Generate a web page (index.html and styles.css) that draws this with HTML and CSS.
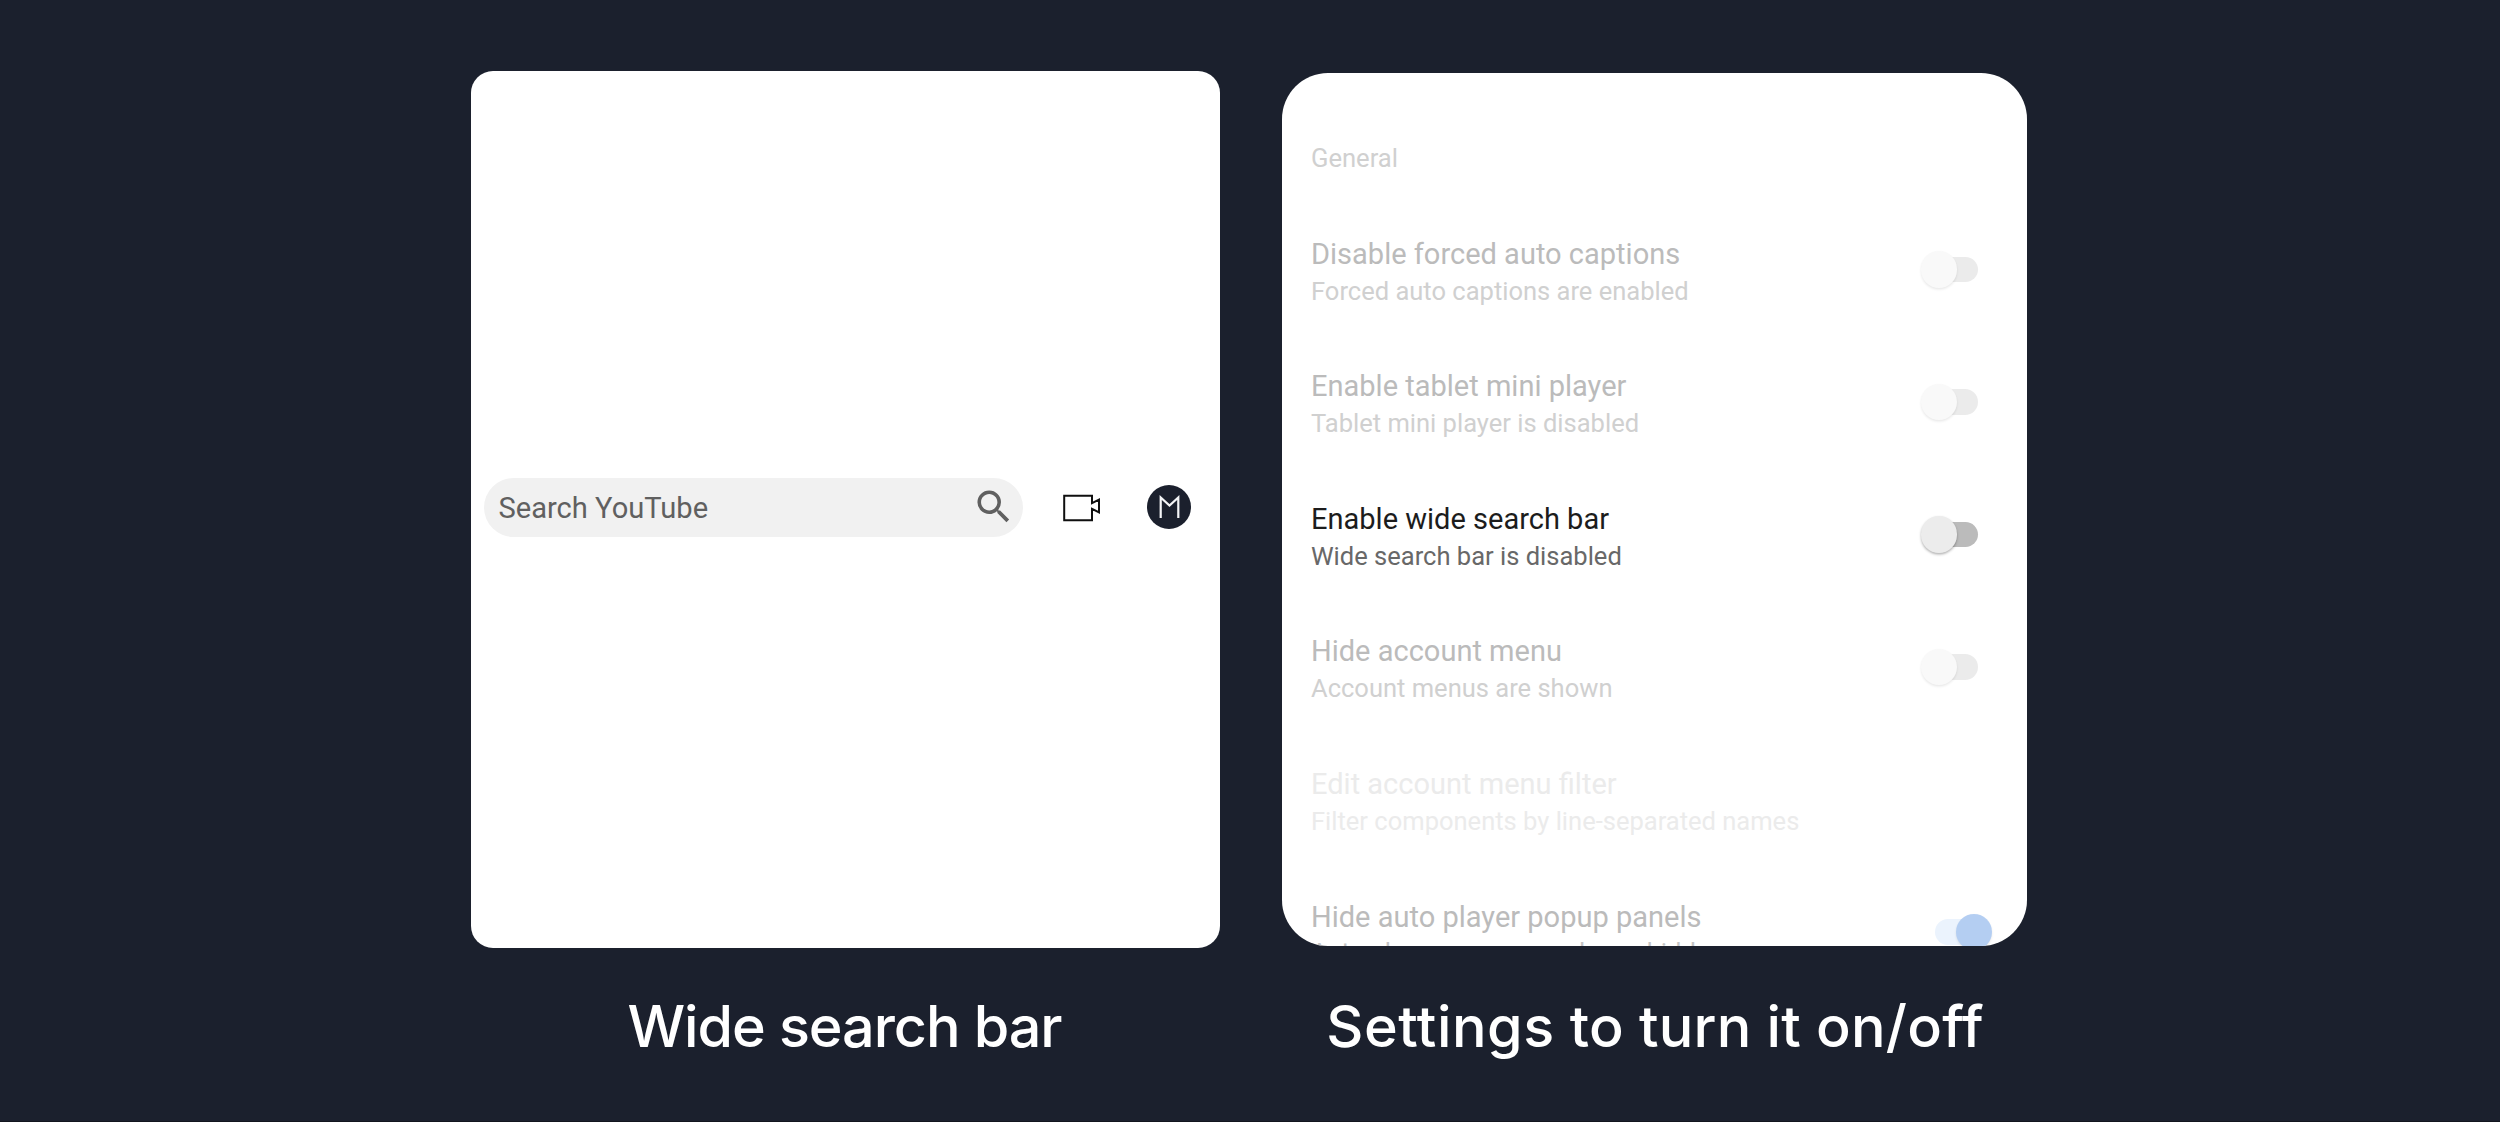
FILE: index.html
```html
<!DOCTYPE html>
<html lang="en">
<head>
<meta charset="utf-8">
<title>Wide search bar</title>
<link rel="stylesheet" href="styles.css">
</head>
<body>
<main class="showcase">
  <figure class="panel panel-preview">
    <div class="card card-preview">
      <div class="appbar">
        <div class="search">
          <span class="search-text">Search YouTube</span>
          <svg class="search-icon" viewBox="0 0 24 24" aria-hidden="true"><path d="M15.5 14h-.79l-.28-.27A6.471 6.471 0 0 0 16 9.5 6.5 6.5 0 1 0 9.500 16c1.610 0 3.090-.59 4.230-1.570l.27.28v.79l5 4.990L20.490 19l-4.990-5zm-6 0C7.010 14 5 11.990 5 9.500S7.010 5 9.500 5 14 7.010 14 9.500 11.990 14 9.500 14z"/></svg>
        </div>
        <svg class="camera-icon" viewBox="0 0 38 28" aria-hidden="true"><path d="M1.200 1.700H29V9.200L36 5.600V18.400L29 14.800V26.300H1.200Z"/></svg>
        <svg class="avatar" viewBox="0 0 44 44" aria-hidden="true"><circle cx="22" cy="22" r="22"/><path d="M13.700 33V12.500L22.500 20.500L31.300 12.500V33"/></svg>
      </div>
    </div>
    <figcaption class="caption caption-preview">Wide search bar</figcaption>
  </figure>

  <figure class="panel panel-settings">
    <div class="card card-settings">
      <h2 class="section">General</h2>
      <div class="row dim">
        <div class="label"><p class="title">Disable forced auto captions</p><p class="summary">Forced auto captions are enabled</p></div>
        <span class="toggle"></span>
      </div>
      <div class="row dim">
        <div class="label"><p class="title">Enable tablet mini player</p><p class="summary">Tablet mini player is disabled</p></div>
        <span class="toggle"></span>
      </div>
      <div class="row">
        <div class="label"><p class="title">Enable wide search bar</p><p class="summary">Wide search bar is disabled</p></div>
        <span class="toggle"></span>
      </div>
      <div class="row dim">
        <div class="label"><p class="title">Hide account menu</p><p class="summary">Account menus are shown</p></div>
        <span class="toggle"></span>
      </div>
      <div class="row disabled">
        <div class="label"><p class="title">Edit account menu filter</p><p class="summary">Filter components by line-separated names</p></div>
      </div>
      <div class="row dim last">
        <div class="label"><p class="title">Hide auto player popup panels</p><p class="summary">Auto player popup panels are hidden</p></div>
        <span class="toggle on"></span>
      </div>
    </div>
    <figcaption class="caption caption-settings"><span class="wide-word">Settings</span> to turn it on/off</figcaption>
  </figure>
</main>
</body>
</html>
```
FILE: styles.css
```css
* { box-sizing: border-box; margin: 0; padding: 0; }

body {
  height: 1122px;
  overflow: hidden;
  background: #1b202d;
  border-bottom: 1px solid #12151e;
  font-family: Roboto, "Liberation Sans", sans-serif;
}

.showcase {
  display: flex;
  align-items: flex-start;
  gap: 62.4px;
  padding: 71px 0 0 471px;
}

.panel { display: flex; flex-direction: column; }
.panel-preview { width: 748.6px; }
.panel-settings { width: 745px; padding-top: 2px; }

.card { background: #fff; overflow: hidden; }
.card-preview { height: 877px; border-radius: 22px; }
.card-settings { height: 873px; border-radius: 46px; padding: 67px 34.4px 0 29px; }

/* App bar preview */
.appbar {
  display: flex;
  align-items: center;
  height: 59px;
  margin: 407px 28.6px 0 13px;
}
.search {
  display: flex;
  align-items: center;
  justify-content: space-between;
  width: 539px;
  height: 59px;
  padding: 0 8px 0 14.5px;
  border-radius: 30px;
  background: #f1f1f1;
}
.search-text { font-size: 29.1px; line-height: 36px; color: #606060; padding-top: 1px; }
.search-icon { width: 43.5px; height: 43.5px; margin-bottom: 1px; fill: #606060; }
.camera-icon { width: 38px; height: 28px; margin-left: 39.6px; fill: none; stroke: #0f0f0f; stroke-width: 2; }
.avatar { width: 44px; height: 44px; margin: 0 0 1px auto; fill: #1b202d; }
.avatar path { fill: none; stroke: #f4f5f7; stroke-width: 2.2; }

/* Settings list */
.section {
  height: 63px;
  font-size: 25.6px;
  font-weight: 400;
  line-height: 36px;
  color: #d0d0d0;
}
.row {
  display: flex;
  justify-content: space-between;
  height: 132.5px;
}
.label { padding-top: 32.5px; white-space: nowrap; }
.title { font-size: 29.03px; line-height: 36px; color: #1c1c1c; }
.summary { margin-top: 1.2px; font-size: 25.52px; line-height: 36px; color: #686868; }
.dim .title { color: #bbb; }
.dim .summary { color: #d0d0d0; }
.disabled .title { color: #ebebeb; }
.disabled .summary { color: #ebebeb; }
.last .title { margin-top: .5px; }
.last .summary { margin-top: -.8px; color: #c4c4c4; }

.toggle {
  display: flex;
  align-items: center;
  width: 58px;
  height: 37px;
  margin: 48px 14.4px 0 0;
}
.toggle::before {
  content: "";
  width: 50px;
  height: 25.6px;
  margin-left: 8px;
  border-radius: 13px;
  background: #bbb;
}
.toggle::after {
  content: "";
  width: 36.5px;
  height: 36.5px;
  flex: none;
  margin-left: -57.5px;
  border-radius: 50%;
  background: #ececec;
  box-shadow: 0 1.5px 2.5px rgba(0, 0, 0, .3);
}
.dim .toggle::before { background: #ebebeb; }
.dim .toggle::after { background: #f9f9f9; box-shadow: 0 1.5px 2.5px rgba(0, 0, 0, .09); }
.dim .toggle.on { margin-right: 0; }
.dim .toggle.on::before { margin-left: 0; background: #ebf3fd; }
.dim .toggle.on::after { margin-left: -29px; background: #b4cef2; }

/* Captions */
.caption {
  font-family: Inter, "Liberation Sans", sans-serif;
  font-size: 57.5px;
  font-weight: 500;
  line-height: 70px;
  color: #fff;
  white-space: nowrap;
}
.caption-preview { margin: 43px 0 0 156.4px; letter-spacing: -1.06px; }
.caption-settings { margin: 45px 0 0 44.3px; letter-spacing: .2px; word-spacing: -.5px; }
.wide-word { letter-spacing: .55px; }
```
